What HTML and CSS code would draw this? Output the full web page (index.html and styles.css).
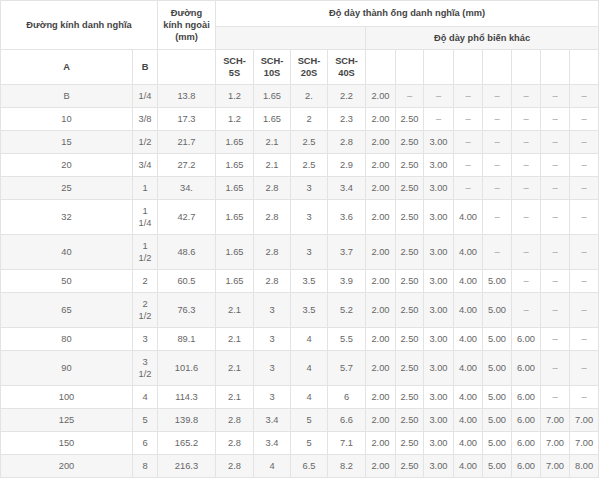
FILE: index.html
```html
<!DOCTYPE html>
<html lang="vi">
<head>
<meta charset="utf-8">
<title>Bảng độ dày ống</title>
<link rel="stylesheet" href="styles.css">
</head>
<body>
<table class="pipe">
  <colgroup>
    <col class="c-a"><col class="c-b"><col class="c-od">
    <col class="c-s1"><col class="c-s2"><col class="c-s2"><col class="c-s1">
    <col class="c-x0"><col class="c-x1"><col class="c-x0">
    <col class="c-x"><col class="c-x"><col class="c-x"><col class="c-x"><col class="c-x">
  </colgroup>
  <thead>
    <tr class="h1">
      <th colspan="2" rowspan="2">Đường kính danh nghĩa</th>
      <th rowspan="2">Đường kính ngoài (mm)</th>
      <th colspan="12">Độ dày thành ống danh nghĩa (mm)</th>
    </tr>
    <tr class="h2 alt">
      <th colspan="4"></th>
      <th colspan="8">Độ dày phổ biến khác</th>
    </tr>
    <tr class="h3">
      <th>A</th><th>B</th><th></th>
      <th>SCH-5S</th><th>SCH-10S</th><th>SCH-20S</th><th>SCH-40S</th>
      <th></th><th></th><th></th><th></th><th></th><th></th><th></th><th></th>
    </tr>
  </thead>
  <tbody>
    <tr class="alt"><td>B</td><td>1/4</td><td>13.8</td><td>1.2</td><td>1.65</td><td>2.</td><td>2.2</td><td>2.00</td><td class="d">–</td><td class="d">–</td><td class="d">–</td><td class="d">–</td><td class="d">–</td><td class="d">–</td><td class="d">–</td></tr>
    <tr><td>10</td><td>3/8</td><td>17.3</td><td>1.2</td><td>1.65</td><td>2</td><td>2.3</td><td>2.00</td><td>2.50</td><td class="d">–</td><td class="d">–</td><td class="d">–</td><td class="d">–</td><td class="d">–</td><td class="d">–</td></tr>
    <tr class="alt"><td>15</td><td>1/2</td><td>21.7</td><td>1.65</td><td>2.1</td><td>2.5</td><td>2.8</td><td>2.00</td><td>2.50</td><td>3.00</td><td class="d">–</td><td class="d">–</td><td class="d">–</td><td class="d">–</td><td class="d">–</td></tr>
    <tr><td>20</td><td>3/4</td><td>27.2</td><td>1.65</td><td>2.1</td><td>2.5</td><td>2.9</td><td>2.00</td><td>2.50</td><td>3.00</td><td class="d">–</td><td class="d">–</td><td class="d">–</td><td class="d">–</td><td class="d">–</td></tr>
    <tr class="alt"><td>25</td><td>1</td><td>34.</td><td>1.65</td><td>2.8</td><td>3</td><td>3.4</td><td>2.00</td><td>2.50</td><td>3.00</td><td class="d">–</td><td class="d">–</td><td class="d">–</td><td class="d">–</td><td class="d">–</td></tr>
    <tr><td>32</td><td>1 1/4</td><td>42.7</td><td>1.65</td><td>2.8</td><td>3</td><td>3.6</td><td>2.00</td><td>2.50</td><td>3.00</td><td>4.00</td><td class="d">–</td><td class="d">–</td><td class="d">–</td><td class="d">–</td></tr>
    <tr class="alt"><td>40</td><td>1 1/2</td><td>48.6</td><td>1.65</td><td>2.8</td><td>3</td><td>3.7</td><td>2.00</td><td>2.50</td><td>3.00</td><td>4.00</td><td class="d">–</td><td class="d">–</td><td class="d">–</td><td class="d">–</td></tr>
    <tr><td>50</td><td>2</td><td>60.5</td><td>1.65</td><td>2.8</td><td>3.5</td><td>3.9</td><td>2.00</td><td>2.50</td><td>3.00</td><td>4.00</td><td>5.00</td><td class="d">–</td><td class="d">–</td><td class="d">–</td></tr>
    <tr class="alt"><td>65</td><td>2 1/2</td><td>76.3</td><td>2.1</td><td>3</td><td>3.5</td><td>5.2</td><td>2.00</td><td>2.50</td><td>3.00</td><td>4.00</td><td>5.00</td><td class="d">–</td><td class="d">–</td><td class="d">–</td></tr>
    <tr><td>80</td><td>3</td><td>89.1</td><td>2.1</td><td>3</td><td>4</td><td>5.5</td><td>2.00</td><td>2.50</td><td>3.00</td><td>4.00</td><td>5.00</td><td>6.00</td><td class="d">–</td><td class="d">–</td></tr>
    <tr class="alt"><td>90</td><td>3 1/2</td><td>101.6</td><td>2.1</td><td>3</td><td>4</td><td>5.7</td><td>2.00</td><td>2.50</td><td>3.00</td><td>4.00</td><td>5.00</td><td>6.00</td><td class="d">–</td><td class="d">–</td></tr>
    <tr><td>100</td><td>4</td><td>114.3</td><td>2.1</td><td>3</td><td>4</td><td>6</td><td>2.00</td><td>2.50</td><td>3.00</td><td>4.00</td><td>5.00</td><td>6.00</td><td class="d">–</td><td class="d">–</td></tr>
    <tr class="alt"><td>125</td><td>5</td><td>139.8</td><td>2.8</td><td>3.4</td><td>5</td><td>6.6</td><td>2.00</td><td>2.50</td><td>3.00</td><td>4.00</td><td>5.00</td><td>6.00</td><td>7.00</td><td>7.00</td></tr>
    <tr><td>150</td><td>6</td><td>165.2</td><td>2.8</td><td>3.4</td><td>5</td><td>7.1</td><td>2.00</td><td>2.50</td><td>3.00</td><td>4.00</td><td>5.00</td><td>6.00</td><td>7.00</td><td>7.00</td></tr>
    <tr class="alt"><td>200</td><td>8</td><td>216.3</td><td>2.8</td><td>4</td><td>6.5</td><td>8.2</td><td>2.00</td><td>2.50</td><td>3.00</td><td>4.00</td><td>5.00</td><td>6.00</td><td>7.00</td><td>8.00</td></tr>
  </tbody>
</table>
</body>
</html>
```
FILE: styles.css
```css
html, body {
  margin: 0;
  padding: 0;
  background: #ffffff;
}

.pipe {
  border-collapse: collapse;
  table-layout: fixed;
  width: 599px;
  font-family: "Liberation Sans", Arial, sans-serif;
  font-size: 9.3px;
  line-height: 12px;
  color: #666666;
}

.c-a { width: 132px; }
.c-b { width: 25px; }
.c-od { width: 58px; }
.c-s1 { width: 38px; }
.c-s2 { width: 37px; }
.c-x0 { width: 30px; }
.c-x1 { width: 28px; }
.c-x { width: 29px; }

.pipe th,
.pipe td {
  border: 1px solid #e3e3e3;
  padding: 5px 4px;
  text-align: center;
  vertical-align: middle;
  overflow: hidden;
}

.pipe th {
  font-weight: bold;
  color: #444444;
}

.pipe .h1 th {
  padding-top: 6px;
  padding-bottom: 6px;
}

.pipe tr.alt {
  background: #f6f6f6;
}

.pipe td.d {
  color: #9a9a9a;
}
```
